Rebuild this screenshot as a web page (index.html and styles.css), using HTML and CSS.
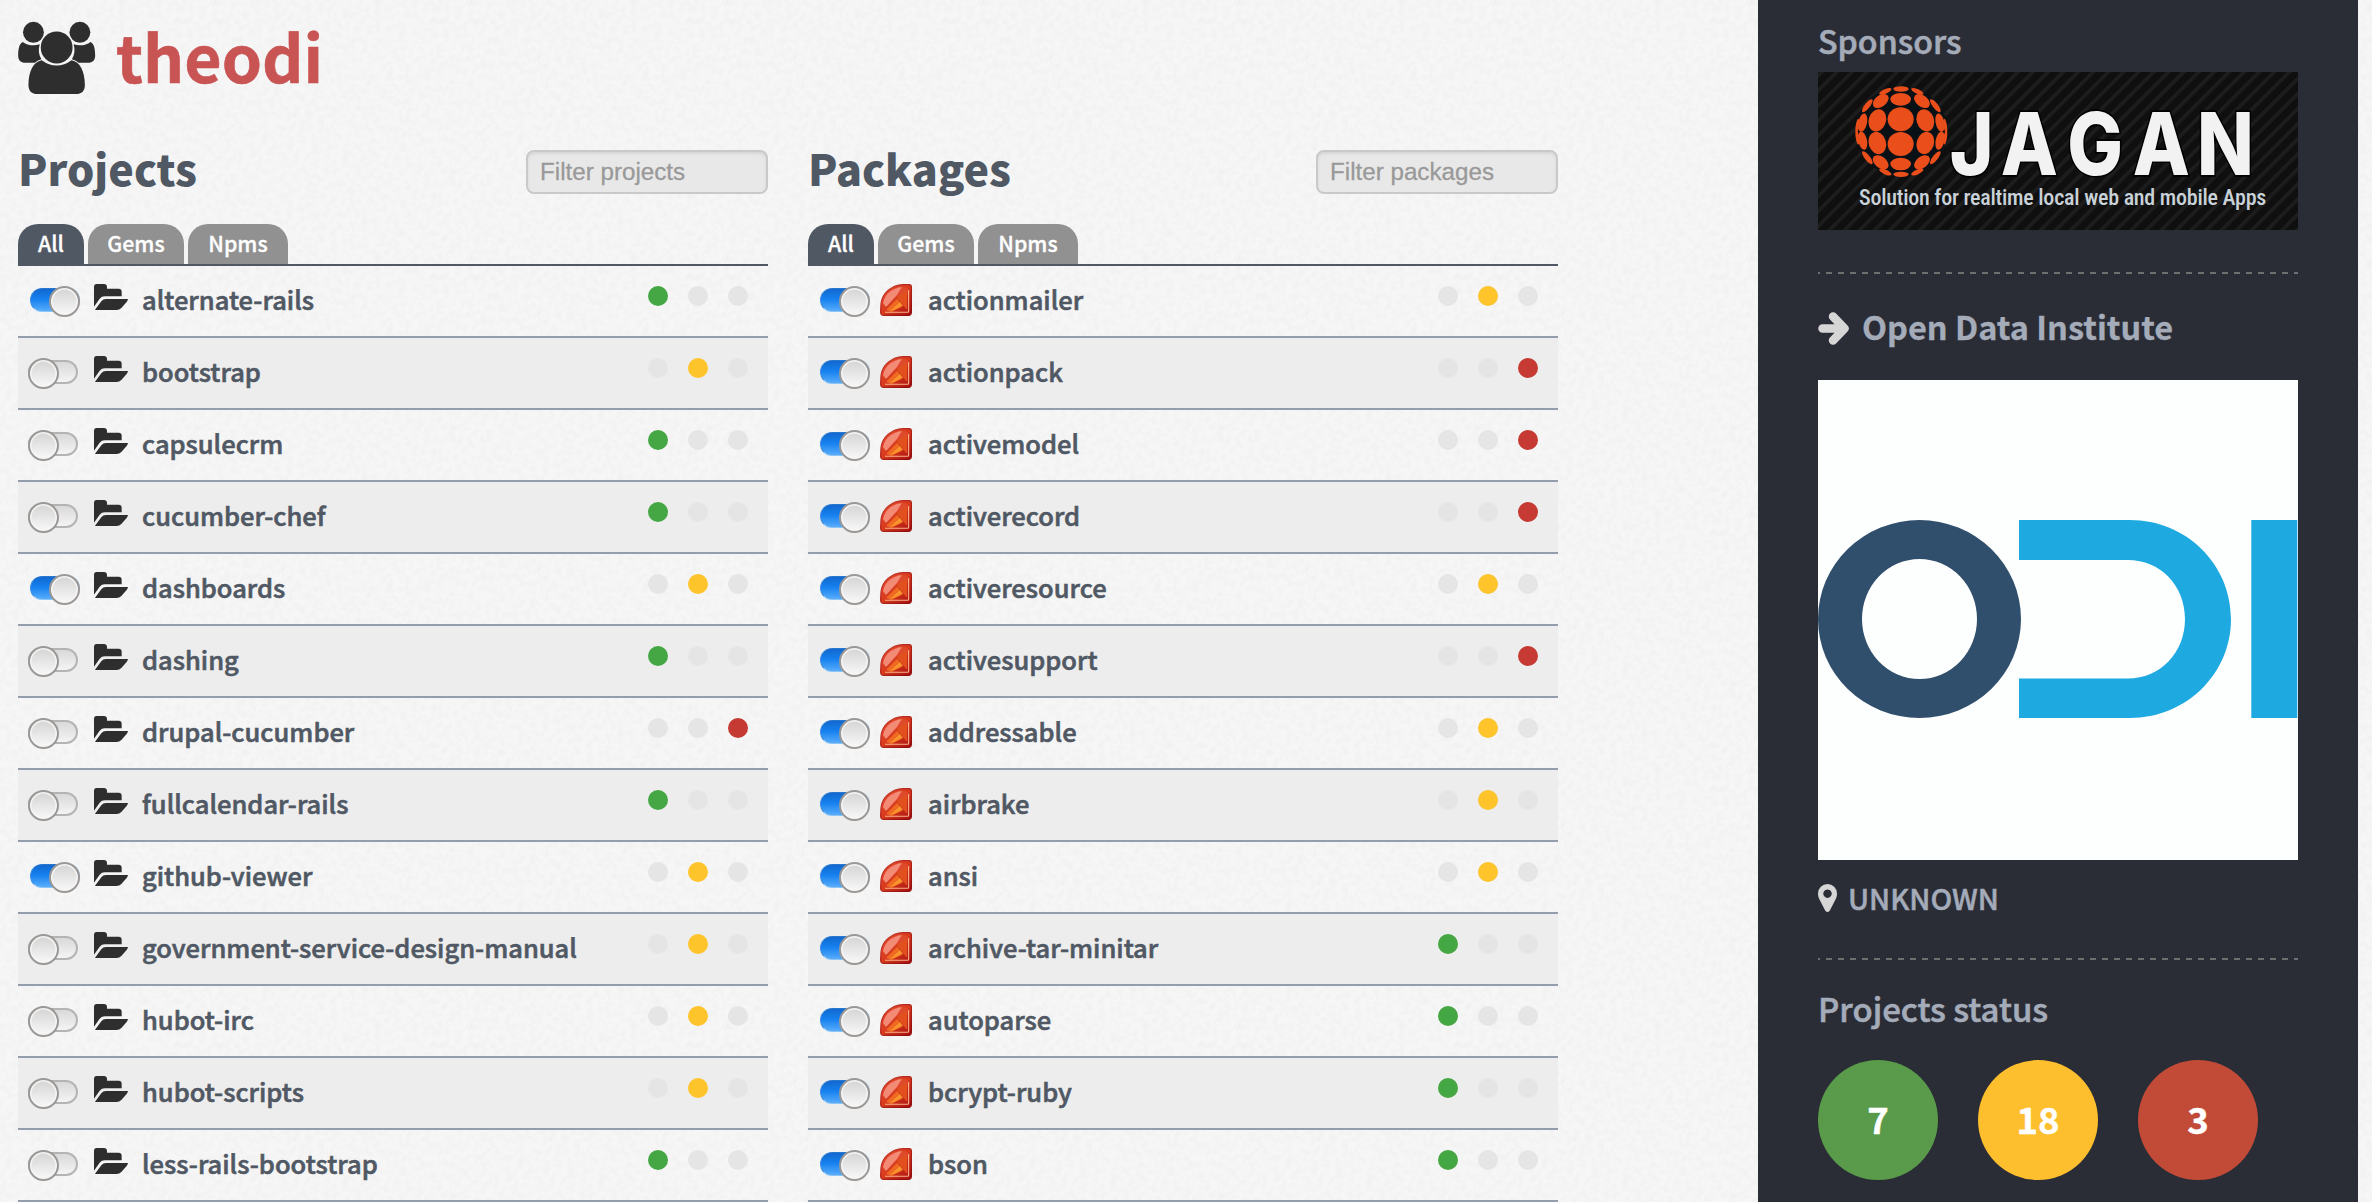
FILE: index.html
```
<!DOCTYPE html>
<html lang="en">
<head>
<meta charset="utf-8">
<title>theodi</title>
<link rel="stylesheet" href="styles.css">
</head>
<body>
<svg width="0" height="0" class="defs" aria-hidden="true">
  <defs>
    <linearGradient id="gem-body" x1="0" y1="0" x2="1" y2="1">
      <stop offset="0" stop-color="#e8503a"/><stop offset=".5" stop-color="#d83a1c"/><stop offset="1" stop-color="#a80f10"/>
    </linearGradient>
    <linearGradient id="gem-edge" x1="0" y1="0" x2="1" y2="1">
      <stop offset="0" stop-color="#d2402c"/><stop offset="1" stop-color="#8c0a0c"/>
    </linearGradient>
    <filter id="soft"><feGaussianBlur stdDeviation=".7"/></filter>
  </defs>
  <symbol id="folder" viewBox="282 222 102 78">
    <path d="M282 290V230q0-8 8-8h22q8 0 9 8v6h35q9 0 9 9v14h-51q-9 0-15 7Z"/>
    <path d="M285 299 304 274Q309 267 318 267H384Q384 270 380 276L364 294Q358 300 350 300H290Q286 300 285 299Z"/>
  </symbol>
  <symbol id="gem" viewBox="0 0 32 32">
    <path d="M1 20C2 9 12 1 23 .6H29Q31.400.6 31.400 3V28Q31.400 31.400 28 31.400H4Q.6 31.400.6 28Z" fill="url(#gem-body)" stroke="url(#gem-edge)" stroke-width="1.200"/>
    <g filter="url(#soft)">
      <path d="M3 19C5 10 12 4 22 3L17 11 6 23Z" fill="#f38a76"/>
      <path d="M22 3 28 4 27 13 17 13Z" fill="#dd4c2b"/>
      <path d="M6 26 17 15 22 21 12 28Z" fill="#ee6a20"/>
      <path d="M17 14 27 6V26L22 20Z" fill="#e0501f"/>
      <path d="M10 27 20 18 23 22 17 25Z" fill="#fb9d33" opacity=".8"/>
    </g>
    <path d="M5 28.300H27.500Q28.600 28.300 28.600 27V6" fill="none" stroke="#f8b18a" stroke-width="1.100"/>
  </symbol>
</svg>
<div class="page">
  <main class="main">
    <h1 class="title">
      <svg class="team" viewBox="54 60 234 226"><circle cx="100" cy="97" r="31.500"/><circle cx="240" cy="97" r="31.500"/><circle cx="170" cy="143" r="48"/><path d="M125 181C100 185 85 215 85 255 85 275 95 283 112 283H228C245 283 255 275 255 255 255 215 240 185 215 181Q193 197 170 197 147 197 125 181Z"/><path id="arm" d="M68 126C58 130 54 145 54 167 54 182 62 189 75 189H104Q111 182 124 178C116 165 114 150 119 133 100 139 81 136 68 126Z"/><use href="#arm" transform="matrix(-1 0 0 1 340 0)"/></svg>
      <span>theodi</span>
    </h1>
    <div class="columns">
      <section>
        <header class="head"><h2>Projects</h2><input class="filter" placeholder="Filter projects"></header>
        <nav class="tabs"><a class="tab active">All</a><a class="tab">Gems</a><a class="tab">Npms</a></nav>
        <ul class="list projects">
          <li><i class="toggle on"></i><svg><use href="#folder"/></svg><span class="name">alternate-rails</span><span class="lights green"><i></i><i></i><i></i></span></li>
          <li><i class="toggle"></i><svg><use href="#folder"/></svg><span class="name">bootstrap</span><span class="lights yellow"><i></i><i></i><i></i></span></li>
          <li><i class="toggle"></i><svg><use href="#folder"/></svg><span class="name">capsulecrm</span><span class="lights green"><i></i><i></i><i></i></span></li>
          <li><i class="toggle"></i><svg><use href="#folder"/></svg><span class="name">cucumber-chef</span><span class="lights green"><i></i><i></i><i></i></span></li>
          <li><i class="toggle on"></i><svg><use href="#folder"/></svg><span class="name">dashboards</span><span class="lights yellow"><i></i><i></i><i></i></span></li>
          <li><i class="toggle"></i><svg><use href="#folder"/></svg><span class="name">dashing</span><span class="lights green"><i></i><i></i><i></i></span></li>
          <li><i class="toggle"></i><svg><use href="#folder"/></svg><span class="name">drupal-cucumber</span><span class="lights red"><i></i><i></i><i></i></span></li>
          <li><i class="toggle"></i><svg><use href="#folder"/></svg><span class="name">fullcalendar-rails</span><span class="lights green"><i></i><i></i><i></i></span></li>
          <li><i class="toggle on"></i><svg><use href="#folder"/></svg><span class="name">github-viewer</span><span class="lights yellow"><i></i><i></i><i></i></span></li>
          <li><i class="toggle"></i><svg><use href="#folder"/></svg><span class="name">government-service-design-manual</span><span class="lights yellow"><i></i><i></i><i></i></span></li>
          <li><i class="toggle"></i><svg><use href="#folder"/></svg><span class="name">hubot-irc</span><span class="lights yellow"><i></i><i></i><i></i></span></li>
          <li><i class="toggle"></i><svg><use href="#folder"/></svg><span class="name">hubot-scripts</span><span class="lights yellow"><i></i><i></i><i></i></span></li>
          <li><i class="toggle"></i><svg><use href="#folder"/></svg><span class="name">less-rails-bootstrap</span><span class="lights green"><i></i><i></i><i></i></span></li>
        </ul>
      </section>
      <section>
        <header class="head"><h2>Packages</h2><input class="filter" placeholder="Filter packages"></header>
        <nav class="tabs"><a class="tab active">All</a><a class="tab">Gems</a><a class="tab">Npms</a></nav>
        <ul class="list packages">
          <li><i class="toggle on"></i><svg><use href="#gem"/></svg><span class="name">actionmailer</span><span class="lights yellow"><i></i><i></i><i></i></span></li>
          <li><i class="toggle on"></i><svg><use href="#gem"/></svg><span class="name">actionpack</span><span class="lights red"><i></i><i></i><i></i></span></li>
          <li><i class="toggle on"></i><svg><use href="#gem"/></svg><span class="name">activemodel</span><span class="lights red"><i></i><i></i><i></i></span></li>
          <li><i class="toggle on"></i><svg><use href="#gem"/></svg><span class="name">activerecord</span><span class="lights red"><i></i><i></i><i></i></span></li>
          <li><i class="toggle on"></i><svg><use href="#gem"/></svg><span class="name">activeresource</span><span class="lights yellow"><i></i><i></i><i></i></span></li>
          <li><i class="toggle on"></i><svg><use href="#gem"/></svg><span class="name">activesupport</span><span class="lights red"><i></i><i></i><i></i></span></li>
          <li><i class="toggle on"></i><svg><use href="#gem"/></svg><span class="name">addressable</span><span class="lights yellow"><i></i><i></i><i></i></span></li>
          <li><i class="toggle on"></i><svg><use href="#gem"/></svg><span class="name">airbrake</span><span class="lights yellow"><i></i><i></i><i></i></span></li>
          <li><i class="toggle on"></i><svg><use href="#gem"/></svg><span class="name">ansi</span><span class="lights yellow"><i></i><i></i><i></i></span></li>
          <li><i class="toggle on"></i><svg><use href="#gem"/></svg><span class="name">archive-tar-minitar</span><span class="lights green"><i></i><i></i><i></i></span></li>
          <li><i class="toggle on"></i><svg><use href="#gem"/></svg><span class="name">autoparse</span><span class="lights green"><i></i><i></i><i></i></span></li>
          <li><i class="toggle on"></i><svg><use href="#gem"/></svg><span class="name">bcrypt-ruby</span><span class="lights green"><i></i><i></i><i></i></span></li>
          <li><i class="toggle on"></i><svg><use href="#gem"/></svg><span class="name">bson</span><span class="lights green"><i></i><i></i><i></i></span></li>
        </ul>
      </section>
    </div>
  </main>
  <aside class="side">
    <h3 class="sponsors">Sponsors</h3>
    <svg class="banner" viewBox="24 18 1440 474">
      <defs>
        <pattern id="stripes" width="32" height="32" patternUnits="userSpaceOnUse" patternTransform="rotate(45)"><rect width="32" height="32" fill="#0f0f0f"/><rect width="11" height="32" fill="#1d1d1d"/></pattern>
      </defs>
      <rect x="24" y="18" width="1440" height="474" fill="url(#stripes)"/>
      <ellipse cx="275" cy="196" rx="138" ry="134" fill="#0a1116"/>
      <g fill="#e94e1b">
        <g id="dome">
          <ellipse cx="273" cy="69" rx="23" ry="8"/>
          <ellipse cx="272" cy="100" rx="31" ry="19"/>
          <ellipse cx="272" cy="160" rx="39" ry="36"/>
          <g id="wing">
            <ellipse cx="226" cy="76" rx="20" ry="7" transform="rotate(-24 226 76)"/>
            <ellipse cx="212" cy="105" rx="27" ry="17" transform="rotate(-38 212 105)"/>
            <ellipse cx="172" cy="119" rx="24" ry="8" transform="rotate(-52 172 119)"/>
            <ellipse cx="202" cy="163" rx="26" ry="34" transform="rotate(17 202 163)"/>
            <ellipse cx="158" cy="170" rx="13" ry="28" transform="rotate(12 158 170)"/>
            <ellipse cx="142" cy="180" rx="5" ry="22" transform="rotate(8 142 180)"/>
          </g>
          <use href="#wing" transform="matrix(-1 0 0 1 548 0)"/>
        </g>
        <use href="#dome" transform="matrix(1 0 0 -1 0 394)"/>
      </g>
      <text class="brand" transform="translate(423 326) scale(.86 1)" x="-4 174 406 634 858">JAGAN</text>
      <text class="tagline" x="147" y="418" textLength="1222">Solution for realtime local web and mobile Apps</text>
    </svg>
    <div class="rule gap"></div>
    <h3 class="org"><svg viewBox="0 0 31 33"><path d="M4.500 16.500H25M15 4.500 26.500 16.500 15 28.500"/></svg>Open Data Institute</h3>
    <svg class="avatar" viewBox="0 0 480 480">
      <rect width="480" height="480" fill="#fdfefe"/>
      <path fill="#304f6c" fill-rule="evenodd" d="M0 239a101.500 99 0 1 1 203 0a101.500 99 0 1 1-203 0ZM44 239a57.500 60 0 1 0 115 0a57.500 60 0 1 0-115 0Z"/>
      <path fill="#1ea9e1" d="M201 140H312C368 140 413 184 413 239S368 338 312 338H201V298.500H310C342 298.500 367 273 367 239S342 180 310 180H201ZM433.300 140H479.300V338H433.300Z"/>
    </svg>
    <p class="place"><svg viewBox="0 0 19 28"><path fill-rule="evenodd" d="M9.500 0A9.500 9.500 0 0 1 19 9.500C19 12 18.500 13.500 17.500 15.500L11.700 26.700Q9.500 29.300 7.300 26.700L1.500 15.500C.5 13.500 0 12 0 9.500A9.500 9.500 0 0 1 9.500 0ZM9.500 5.500a4.200 4.200 0 1 0 .01 0Z"/></svg>UNKNOWN</p>
    <div class="rule"></div>
    <h3 class="status">Projects status</h3>
    <div class="counts"><span class="count ok">7</span><span class="count warn">18</span><span class="count bad">3</span></div>
  </aside>
</div>
</body>
</html>
```
FILE: styles.css
```
* { box-sizing: border-box; }
body {
  margin: 0;
  height: 1202px;
  overflow: hidden;
  font-family: "Noto Sans CJK SC", "Noto Sans", sans-serif;
  color: #505864;
  background: #f6f6f6 url("data:image/svg+xml,%3Csvg xmlns='http://www.w3.org/2000/svg' width='256' height='256'%3E%3Cfilter id='n' x='0' y='0' width='100%25' height='100%25'%3E%3CfeTurbulence type='fractalNoise' baseFrequency='.16' numOctaves='3' stitchTiles='stitch'/%3E%3CfeColorMatrix values='0 0 0 0 .5 0 0 0 0 .5 0 0 0 0 .5 .22 0 0 0 -.09'/%3E%3C/filter%3E%3Crect width='256' height='256' filter='url(%23n)'/%3E%3C/svg%3E");
}
h1, h2, h3, p, ul { margin: 0; padding: 0; }
svg { display: block; flex: none; }
.defs { position: absolute; }
.page { display: flex; height: 1202px; }
.main { width: 1758px; padding-left: 18px; }
.title { display: flex; gap: 20px; height: 110px; font-size: 64.4px; font-weight: 700; line-height: 111px; color: #c95454; -webkit-text-stroke: .6px; }
.team { width: 78px; height: 75px; margin-top: 20px; fill: #2e2e2e; }
.columns { display: flex; gap: 40px; }
.columns section { width: 750px; }
.head { display: flex; justify-content: space-between; height: 114px; }
.head h2 { font-size: 43px; font-weight: 900; line-height: 114px; }
.filter {
  width: 242px;
  height: 44px;
  margin-top: 40px;
  padding: 0 12px;
  border: 2px solid #c9c9c9;
  border-radius: 8px;
  background: #e8e8e8;
  box-shadow: inset 0 2px 3px rgba(0, 0, 0, .08);
  font: 24.200px "Liberation Sans", sans-serif;
}
.filter::placeholder { color: #999; opacity: 1; -webkit-text-stroke: .3px; }
.tabs { display: flex; gap: 4px; height: 42px; border-bottom: 2px solid #505864; }
.tab {
  width: 96px;
  height: 40px;
  border-radius: 20px 20px 0 0;
  background: #919191;
  color: #fff;
  font-size: 21.300px;
  font-weight: 500;
  line-height: 37px;
  text-align: center;
  -webkit-text-stroke: .3px;
}
.tab.active { width: 66px; height: 42px; background: #505864; }
.tab:last-child { width: 100px; }
.list { list-style: none; }
.list li { display: flex; height: 72px; padding: 0 20px 0 10px; border-bottom: 2px solid #949dac; }
.list li:nth-child(even) { background: #ededed; }
.list svg { fill: #2e2e2e; }
.projects svg { width: 34px; height: 26px; margin: 18px 14px 0 16px; }
.packages svg { width: 32px; height: 32px; margin: 18px 16px 0 12px; }
.name { flex: 1; font-size: 25.500px; font-weight: 500; line-height: 66px; -webkit-text-stroke: .6px; }
.lights { display: flex; gap: 20px; padding-top: 20px; }
.lights i { width: 20px; height: 20px; border-radius: 50%; background: #e5e5e5; }
.green i:nth-child(1) { background: #44a744; }
.yellow i:nth-child(2) { background: #fec42c; }
.red i:nth-child(3) { background: #c53a33; }
.toggle {
  display: flex;
  width: 50px;
  height: 24px;
  margin-top: 22px;
  border: 2px solid #b4b4b4;
  border-radius: 12px;
  background: linear-gradient(#d9d9d9, #f4f4f4);
}
.toggle::before {
  content: "";
  width: 27px;
  height: 27px;
  margin: -4px 0 0 -2px;
  border: 2px solid #9b9896;
  border-radius: 50%;
  background: linear-gradient(#d4d4d4, #f8f8f8);
  box-shadow: inset 0 0 0 1.500px #f6f6f6;
}
.toggle.on {
  margin-left: 2px;
  margin-right: -2px;
  justify-content: flex-end;
  border-width: 1px;
  border-color: #2a78cc #8ec3f5 #8ec3f5 #3b8ce0;
  background: linear-gradient(#1268d0, #1580ee 45%, #58acfb);
}
.toggle.on::before { margin: -3px -1px 0 0; }
.side { width: 600px; height: 1202px; padding: 8px 60px 0; background: #2b2d36; color: #a4abb9; }
.side h3 { font-size: 32.900px; font-weight: 500; -webkit-text-stroke: .6px; }
.side .sponsors { font-size: 32.200px; line-height: 64px; }
.banner { width: 480px; height: 158px; }
.brand {
  font: 800 259px Inter, sans-serif;
  fill: #f2f2f2;
  stroke: #000;
  stroke-width: 10px;
  paint-order: stroke;
}
.tagline { font: 500 66px "Roboto Condensed", Roboto, sans-serif; fill: #c9d2d8; }
.rule { height: 2px; background: repeating-linear-gradient(90deg, #6f6f70 0 2px, transparent 2px 8px, #6f6f70 8px 12px); }
.rule.gap { margin-top: 42px; }
.side .org { display: flex; gap: 13px; height: 106px; font-size: 32.500px; font-weight: 700; line-height: 104px; -webkit-text-stroke: .3px; }
.org svg { width: 31px; height: 33px; margin-top: 38px; fill: none; stroke: #d6d6d6; stroke-width: 8.500px; stroke-linecap: round; stroke-linejoin: round; }
.avatar { width: 480px; height: 480px; }
.place { display: flex; gap: 11px; height: 98px; font-size: 28.800px; font-weight: 500; line-height: 75px; -webkit-text-stroke: .5px; }
.place svg { width: 19px; height: 28px; margin-top: 24px; fill: #d6d6d6; }
.side .status { height: 100px; line-height: 96px; }
.counts { display: flex; gap: 40px; }
.count { width: 120px; height: 120px; border-radius: 50%; color: #fff; font-size: 36.500px; font-weight: 700; line-height: 117px; text-align: center; -webkit-text-stroke: .4px; }
.ok { background: #599b4a; }
.warn { background: #fdbf2d; }
.bad { background: #c14b37; }
```
